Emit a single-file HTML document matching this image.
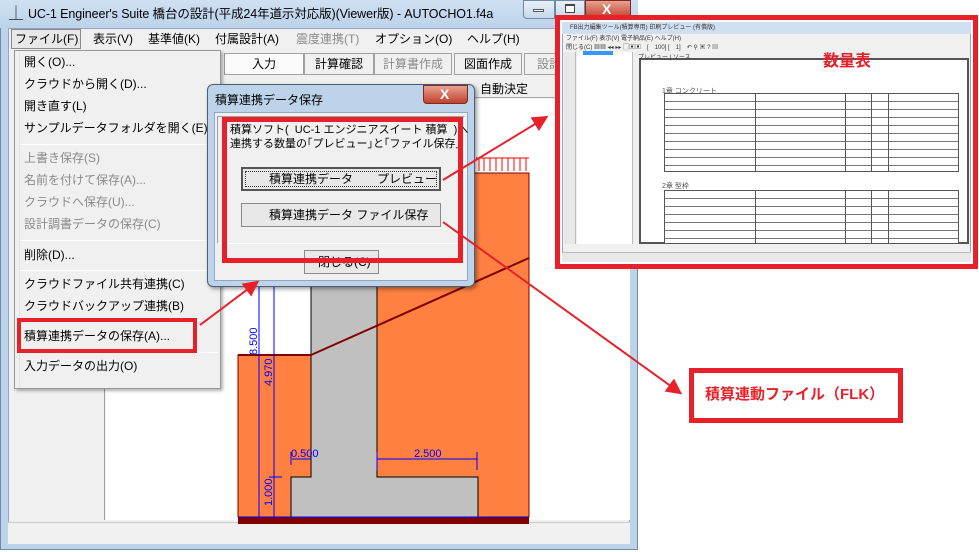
<!DOCTYPE html>
<html><head><meta charset="utf-8">
<style>
*{margin:0;padding:0;box-sizing:border-box}
body{width:979px;height:552px;background:#fff;position:relative;overflow:hidden;font-family:"Liberation Sans","Noto Sans CJK JP",sans-serif;font-size:12px;color:#000}
.a{position:absolute}
.t{position:absolute;white-space:nowrap;line-height:16px}
.mi{position:absolute;left:24px;white-space:nowrap;font-size:12px;line-height:16px}
.dis{color:#8a8a8a}
.sep{position:absolute;left:20px;width:198px;height:1px;background:#d6d6d6;border-bottom:1px solid #fff}
.tab{position:absolute;top:53px;height:22px;border:1px solid #a0a0a0;background:#f0f0f0;text-align:center;line-height:20px;font-size:12px}
</style></head><body>
<div class="a" style="left:0;top:0;width:638px;height:550px;background:#bcd3ea;border:1px solid #6f8aa8;border-radius:6px 6px 0 0"></div>
<div class="a" style="left:0;top:0;width:638px;height:28px;background:linear-gradient(#cfe0f2,#bcd3ea)"></div>
<div class="t" style="left:9px;top:5px;font-size:14px;">⏊</div>
<div class="t" style="left:28px;top:6px;font-size:12.5px;letter-spacing:-0.1px">UC-1 Engineer's Suite 橋台の設計(平成24年道示対応版)(Viewer版) - AUTOCHO1.f4a</div>
<div class="a" style="left:523px;top:0;width:32px;height:19px;border:1px solid #6f8aa8;border-radius:0 0 0 4px;background:linear-gradient(#e8f0f8,#c6d8ec)"></div>
<div class="a" style="left:533px;top:9px;width:11px;height:3px;background:#fff;border:1px solid #555"></div>
<div class="a" style="left:555px;top:0;width:30px;height:19px;border:1px solid #6f8aa8;background:linear-gradient(#e8f0f8,#c6d8ec)"></div>
<div class="a" style="left:565px;top:4px;width:10px;height:9px;border:1px solid #444;border-top-width:2px;background:#fff"></div>
<div class="a" style="left:585px;top:0;width:46px;height:19px;border:1px solid #7a2a20;border-radius:0 0 4px 0;background:linear-gradient(#e9a090,#c0412c)"></div>
<div class="t" style="left:602px;top:1px;color:#fff;font-weight:bold;font-size:14px">X</div>
<div class="a" style="left:8px;top:28px;width:622px;height:516px;background:#f0f0f0;border:1px solid #8fa7c2"></div>
<div class="a" style="left:11px;top:29px;width:70px;height:20px;border:1px solid #8a8a8a;background:#e8e8e8"></div>
<div class="t" style="left:15px;top:31px">ファイル(F)</div>
<div class="t" style="left:93px;top:31px">表示(V)</div>
<div class="t" style="left:148px;top:31px">基準値(K)</div>
<div class="t" style="left:215px;top:31px">付属設計(A)</div>
<div class="t dis" style="left:296px;top:31px">震度連携(T)</div>
<div class="t" style="left:375px;top:31px">オプション(O)</div>
<div class="t" style="left:467px;top:31px">ヘルプ(H)</div>
<div class="tab" style="left:224px;width:80px;background:#fafafa">入力</div>
<div class="tab" style="left:304px;width:70px">計算確認</div>
<div class="tab dis" style="left:374px;width:78px">計算書作成</div>
<div class="tab" style="left:454px;width:68px">図面作成</div>
<div class="tab dis" style="left:524px;width:40px;text-align:left;padding-left:12px;border-right:none">設計</div>
<div class="a" style="left:105px;top:78px;width:525px;height:20px;background:#f0f0f0;border-bottom:1px solid #aaa"></div>
<div class="t" style="left:480px;top:81px">自動決定</div>
<div class="a" style="left:10px;top:50px;width:95px;height:470px;background:#f0f0f0;border-right:1px solid #a0a0a0"></div>
<div class="a" style="left:106px;top:99px;width:524px;height:421px;background:#fff"></div>
<div class="a" style="left:8px;top:522px;width:622px;height:22px;background:#f0f0f0;border-top:1px solid #ccc"></div>
<svg class="a" style="left:0;top:0" width="979" height="552">
 <rect x="377" y="173" width="152" height="344" fill="#ff8040" stroke="#7a0000" stroke-width="1"/>
 <rect x="238" y="355" width="73" height="162" fill="#ff8040" stroke="#7a0000" stroke-width="1"/>
 <path d="M311 98 V477 H291 V517 H478 V477 H377 V98 Z" fill="#c0c0c0" stroke="#000" stroke-width="1"/>
 <line x1="238" y1="355" x2="311" y2="355" stroke="#800000" stroke-width="2"/>
 <line x1="311" y1="355" x2="529" y2="258" stroke="#800000" stroke-width="2"/>
 <rect x="238" y="517" width="291" height="7" fill="#800000"/>
 <line x1="238" y1="517" x2="529" y2="517" stroke="#0000ff" stroke-width="1"/>
 <g stroke="#ff0000" stroke-width="1" fill="none">
  <line x1="476" y1="158" x2="529" y2="158"/>
  <path d="M479 158V171M484 158V171M490 158V171M496 158V171M502 158V171M508 158V171M514 158V171M520 158V171M526 158V171"/>
 </g>
 <g stroke="#0000ff" stroke-width="1" fill="none">
  <line x1="259" y1="285" x2="259" y2="517"/>
  <line x1="274" y1="285" x2="274" y2="517"/>
  <line x1="269" y1="477" x2="282" y2="477"/>
  <line x1="292" y1="459" x2="311" y2="459"/>
  <line x1="291" y1="452" x2="291" y2="465"/>
  <line x1="377" y1="459" x2="477" y2="459"/>
  <line x1="377" y1="452" x2="377" y2="470"/>
  <line x1="477" y1="452" x2="477" y2="470"/>
 </g>
 <g fill="#0000ff" font-family="Liberation Sans" font-size="11">
  <text transform="translate(257,355) rotate(-90)">8.500</text>
  <text transform="translate(272,386) rotate(-90)">4.970</text>
  <text transform="translate(272,506) rotate(-90)">1.000</text>
  <text x="291" y="457">0.500</text>
  <text x="414" y="457">2.500</text>
 </g>
</svg>
<div class="a" style="left:14px;top:50px;width:207px;height:339px;background:#f0f0f0;border:1px solid #979797;box-shadow:2px 2px 3px rgba(0,0,0,.3)"></div>
<div class="a" style="left:19px;top:51px;width:1px;height:337px;background:#e2e3e3"></div>
<div class="mi" style="top:54px">開く(O)...</div>
<div class="mi" style="top:76px">クラウドから開く(D)...</div>
<div class="mi" style="top:98px">開き直す(L)</div>
<div class="mi" style="top:120px">サンプルデータフォルダを開く(E)</div>
<div class="sep" style="top:144px"></div>
<div class="mi dis" style="top:150px">上書き保存(S)</div>
<div class="mi dis" style="top:172px">名前を付けて保存(A)...</div>
<div class="mi dis" style="top:194px">クラウドへ保存(U)...</div>
<div class="mi dis" style="top:216px">設計調書データの保存(C)</div>
<div class="sep" style="top:240px"></div>
<div class="mi" style="top:247px">削除(D)...</div>
<div class="sep" style="top:270px"></div>
<div class="mi" style="top:276px">クラウドファイル共有連携(C)</div>
<div class="mi" style="top:298px">クラウドバックアップ連携(B)</div>
<div class="mi" style="top:328px">積算連携データの保存(A)...</div>
<div class="sep" style="top:352px"></div>
<div class="mi" style="top:358px">入力データの出力(O)</div>
<div class="a" style="left:17px;top:318px;width:180px;height:35px;border:4px solid #e8202a"></div>
<div class="a" style="left:207px;top:84px;width:268px;height:203px;background:#bcd3ea;border:1px solid #4a5f78;border-radius:6px;box-shadow:2px 2px 4px rgba(0,0,0,.4)"></div>
<div class="t" style="left:215px;top:92px">積算連携データ保存</div>
<div class="a" style="left:423px;top:85px;width:45px;height:19px;border:1px solid #7a2a20;border-radius:0 0 4px 4px;background:linear-gradient(#e9a090,#c0412c)"></div>
<div class="t" style="left:440px;top:86px;color:#fff;font-weight:bold;font-size:14px">X</div>
<div class="a" style="left:214px;top:112px;width:254px;height:169px;background:#f0f0f0;border:1px solid #8fa7c2"></div>
<div class="a" style="left:217px;top:116px;width:248px;height:128px;border:1px solid #a0a0a0;border-right-color:#fff;border-bottom-color:#fff"></div>
<div class="t" style="left:230px;top:122px;font-size:11px">積算ソフト(&nbsp; UC-1 エンジニアスイート 積算&nbsp; )へ</div>
<div class="t" style="left:230px;top:136px;font-size:11px">連携する数量の｢プレビュー｣と｢ファイル保存｣</div>
<div class="a" style="left:241px;top:167px;width:200px;height:24px;background:#e8e8e8;border:2px solid #555;"></div>
<div class="a" style="left:245px;top:171px;width:192px;height:16px;border:1px dotted #333"></div>
<div class="t" style="left:269px;top:171px">積算連携データ　　プレビュー</div>
<div class="a" style="left:241px;top:203px;width:200px;height:24px;background:#e8e8e8;border:1px solid #8a8a8a"></div>
<div class="t" style="left:269px;top:207px">積算連携データ ファイル保存</div>
<div class="a" style="left:304px;top:250px;width:75px;height:24px;background:#e8e8e8;border:1px solid #8a8a8a"></div>
<div class="t" style="left:318px;top:254px">閉じる(C)</div>
<div class="a" style="left:222px;top:117px;width:241px;height:146px;border:5px solid #e8202a"></div>
<div class="a" style="left:555px;top:15px;width:423px;height:254px;background:#fff;border:5px solid #e8202a"></div>
<div class="a" style="left:562px;top:22px;width:409px;height:240px;background:#f0f0f0;border:1px solid #8fa7c2"></div>
<div class="a" style="left:562px;top:22px;width:409px;height:12px;background:#cfdff0"></div>
<div class="t" style="left:570px;top:20px;font-size:6px;color:#333">FB出力編集ツール(積算専用) 印刷プレビュー (有償版)</div>
<div class="t" style="left:566px;top:31px;font-size:6px;color:#333">ファイル(F)  表示(V)  電子納品(E)  ヘルプ(H)</div>
<div class="t" style="left:566px;top:40px;font-size:6px;color:#333">閉じる(C) ▦▦ ◂◂ ▸▸ ▢▣▣　[　100] [　1]　↶ ⚲ ▣ ? ▤</div>
<div class="a" style="left:564px;top:52px;width:12px;height:192px;background:#e8e8e8;border-right:1px solid #bbb"></div>
<div class="a" style="left:577px;top:52px;width:56px;height:192px;background:#fff;border-right:1px solid #bbb"></div>
<div class="a" style="left:583px;top:51px;width:30px;height:4px;background:#3399ff"></div>
<div class="a" style="left:639px;top:58px;width:330px;height:186px;background:#fff;border:2px solid #555"></div>
<div class="t" style="left:638px;top:50px;font-size:6px;color:#333">プレビュー | ソース</div>
<div class="t" style="left:823px;top:52px;font-size:16px;font-weight:bold;color:#e8202a;line-height:20px">数量表</div>
<div class="t" style="left:662px;top:84px;font-size:7px;color:#555">1章 コンクリート</div>
<div class="a" style="left:664px;top:93px;width:295px;height:79px;border:1px solid #555;background:repeating-linear-gradient(#fff 0 7px,#777 7px 8px)"></div>
<div class="a" style="left:755px;top:93px;width:1px;height:79px;background:#555"></div>
<div class="a" style="left:845px;top:93px;width:1px;height:79px;background:#555"></div>
<div class="a" style="left:871px;top:93px;width:1px;height:79px;background:#555"></div>
<div class="a" style="left:888px;top:93px;width:1px;height:79px;background:#555"></div>
<div class="t" style="left:662px;top:179px;font-size:7px;color:#555">2章 型枠</div>
<div class="a" style="left:664px;top:190px;width:295px;height:54px;border:1px solid #555;background:repeating-linear-gradient(#fff 0 7px,#777 7px 8px)"></div>
<div class="a" style="left:755px;top:190px;width:1px;height:54px;background:#555"></div>
<div class="a" style="left:845px;top:190px;width:1px;height:54px;background:#555"></div>
<div class="a" style="left:871px;top:190px;width:1px;height:54px;background:#555"></div>
<div class="a" style="left:888px;top:190px;width:1px;height:54px;background:#555"></div>
<div class="a" style="left:562px;top:252px;width:409px;height:10px;background:#e8e8e8;border-top:1px solid #bbb"></div>
<div class="a" style="left:689px;top:368px;width:214px;height:55px;background:#fff;border:5px solid #e8202a"></div>
<div class="t" style="left:705px;top:386px;font-size:15px;font-weight:bold;color:#e8202a;line-height:18px">積算連動ファイル（FLK）</div>
<svg class="a" style="left:0;top:0" width="979" height="552">
 <defs><marker id="m" markerWidth="8" markerHeight="8" refX="6" refY="4" orient="auto"><path d="M0,0 L8,4 L0,8 Z" fill="#e8202a"/></marker></defs>
 <g stroke="#e8202a" stroke-width="2" fill="none" marker-end="url(#m)">
  <line x1="200" y1="325" x2="256" y2="283"/>
  <line x1="443" y1="180" x2="545" y2="118"/>
  <line x1="443" y1="222" x2="679" y2="392"/>
 </g>
</svg>
</body></html>
